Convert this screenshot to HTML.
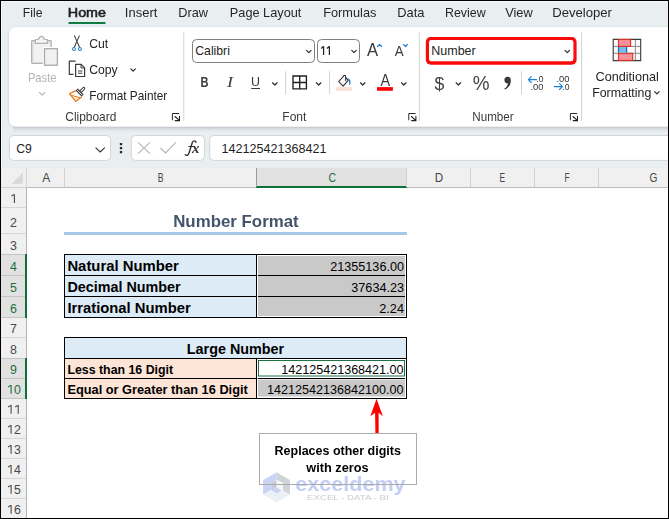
<!DOCTYPE html>
<html><head><meta charset="utf-8"><title>Excel</title>
<style>html,body{margin:0;padding:0;background:#fff;overflow:hidden}svg{display:block}text{font-family:"Liberation Sans",sans-serif;white-space:pre}</style>
</head><body>
<svg width="669" height="519" viewBox="0 0 669 519">
<defs>
<filter id="sh" x="-5%" y="-20%" width="110%" height="150%"><feGaussianBlur stdDeviation="1.6"/></filter>
<linearGradient id="rs" x1="0" y1="0" x2="0" y2="1"><stop offset="0" stop-color="#aab3bc" stop-opacity="0.75"/><stop offset="0.45" stop-color="#b8c0c8" stop-opacity="0.35"/><stop offset="1" stop-color="#c8d0d8" stop-opacity="0"/></linearGradient>
</defs>
<rect x="0" y="0" width="669" height="519" fill="#e9eef1" />
<g opacity="0.999">
<text x="22.8" y="16.8" textLength="19.6" lengthAdjust="spacingAndGlyphs" font-size="12.2" font-weight="normal" font-style="normal" fill="#262626" >File</text>
<text x="67.8" y="16.8" textLength="38.2" lengthAdjust="spacingAndGlyphs" font-size="12.2" font-weight="normal" font-style="normal" fill="#1f1f1f" stroke="#1f1f1f" stroke-width="0.55">Home</text>
<text x="124.8" y="16.8" textLength="32.6" lengthAdjust="spacingAndGlyphs" font-size="12.2" font-weight="normal" font-style="normal" fill="#262626" >Insert</text>
<text x="178.2" y="16.8" textLength="29.8" lengthAdjust="spacingAndGlyphs" font-size="12.2" font-weight="normal" font-style="normal" fill="#262626" >Draw</text>
<text x="229.8" y="16.8" textLength="71.6" lengthAdjust="spacingAndGlyphs" font-size="12.2" font-weight="normal" font-style="normal" fill="#262626" >Page Layout</text>
<text x="323.2" y="16.8" textLength="53.2" lengthAdjust="spacingAndGlyphs" font-size="12.2" font-weight="normal" font-style="normal" fill="#262626" >Formulas</text>
<text x="397.2" y="16.8" textLength="27.2" lengthAdjust="spacingAndGlyphs" font-size="12.2" font-weight="normal" font-style="normal" fill="#262626" >Data</text>
<text x="445.0" y="16.8" textLength="40.7" lengthAdjust="spacingAndGlyphs" font-size="12.2" font-weight="normal" font-style="normal" fill="#262626" >Review</text>
<text x="505.2" y="16.8" textLength="27.5" lengthAdjust="spacingAndGlyphs" font-size="12.2" font-weight="normal" font-style="normal" fill="#262626" >View</text>
<text x="552.2" y="16.8" textLength="59.8" lengthAdjust="spacingAndGlyphs" font-size="12.2" font-weight="normal" font-style="normal" fill="#262626" >Developer</text>
<rect x="68.3" y="22" width="37.4" height="2" fill="#107c41" rx="1"/>
<rect x="9" y="28" width="680" height="98.6" rx="8" fill="#8d969e" opacity="0.5" filter="url(#sh)"/>
<rect x="13" y="126" width="660" height="6" fill="url(#rs)"/>
<rect x="9" y="27" width="680" height="99.8" rx="7" fill="#ffffff"/>
<line x1="183.8" y1="32.3" x2="183.8" y2="121" stroke="#d2d2d2" stroke-width="1" />
<line x1="419.3" y1="32.3" x2="419.3" y2="121" stroke="#d2d2d2" stroke-width="1" />
<line x1="581.6" y1="32.3" x2="581.6" y2="121" stroke="#d2d2d2" stroke-width="1" />
<line x1="285.6" y1="71.2" x2="285.6" y2="94.3" stroke="#d2d2d2" stroke-width="1" />
<line x1="329.6" y1="71.2" x2="329.6" y2="94.3" stroke="#d2d2d2" stroke-width="1" />
<line x1="521.5" y1="71.2" x2="521.5" y2="94.3" stroke="#d2d2d2" stroke-width="1" />
<g>
<rect x="31.6" y="40.7" width="19.6" height="22.7" rx="0.8" fill="#e3e3e3" stroke="#b2b2b2" stroke-width="1.2"/>
<rect x="33.7" y="43.6" width="16.4" height="18.4" fill="#f2f2f2"/>
<path d="M35.4 43.4 V39.5 H38.4 C38.9 37.4 40 36.4 41.4 36.4 C42.8 36.4 43.9 37.4 44.4 39.5 H47.4 V43.4 Z" fill="#f5f5f5" stroke="#b2b2b2" stroke-width="1.2" stroke-linejoin="round"/>
<rect x="42.8" y="47" width="16" height="19.5" fill="#ffffff"/>
<rect x="44.5" y="48.7" width="12.9" height="16.5" fill="#f1f1f1" stroke="#aaaaaa" stroke-width="1.3"/>
</g>
<text x="27.9" y="81.8" textLength="28.6" lengthAdjust="spacingAndGlyphs" font-size="12.2" font-weight="normal" font-style="normal" fill="#b4b4b4" >Paste</text>
<path d="M39.4 92.39999999999999 L42.1 95.2 L44.800000000000004 92.39999999999999" fill="none" stroke="#b4b4b4" stroke-width="1.1" stroke-linecap="round" stroke-linejoin="round"/>
<g fill="none" stroke="#444" stroke-width="1.1" stroke-linecap="round">
<path d="M74.5 35.9 L79.5 47.3 M79.3 35.9 L74.3 47.3"/>
</g>
<circle cx="73.95" cy="49" r="1.45" fill="#fff" stroke="#1a7fd6" stroke-width="1.05"/>
<circle cx="79.9" cy="49" r="1.45" fill="#fff" stroke="#1a7fd6" stroke-width="1.05"/>
<text x="89.2" y="48.1" textLength="19.0" lengthAdjust="spacingAndGlyphs" font-size="12.2" font-weight="normal" font-style="normal" fill="#242424" >Cut</text>
<g fill="none" stroke="#3b3b3b" stroke-width="1.2" stroke-linejoin="round">
<path d="M75.6 61.2 H69.3 V74.4 H73.5"/>
<path d="M75.6 64.4 H81.2 L84.6 67.8 V76.5 H75.6 Z"/>
<path d="M81 64.6 V68 H84.4" stroke-width="1"/>
<path d="M78 71 H82.4 M78 73.2 H82.4" stroke-width="1"/>
</g>
<text x="89.2" y="73.7" textLength="28.5" lengthAdjust="spacingAndGlyphs" font-size="12.2" font-weight="normal" font-style="normal" fill="#242424" >Copy</text>
<path d="M130.85 68.875 L133.1 71.125 L135.35 68.875" fill="none" stroke="#2c2c2c" stroke-width="1.2" stroke-linecap="round" stroke-linejoin="round"/>
<g stroke-linejoin="round" stroke-linecap="round" fill="none">
<path d="M75.4 90.9 L69.5 93.7 L75.8 101.4 L81.5 97" fill="#fff" stroke="#e8730c" stroke-width="1.2"/>
<path d="M74.6 98 L78 98.3 L76.1 100.4 Z" fill="#ffd79a" stroke="none"/>
<path d="M70.9 95.2 L79.6 97.6" stroke="#e8730c" stroke-width="1"/>
<path d="M80.8 91.4 L83.7 88.5" stroke="#333" stroke-width="3.1"/>
<path d="M80.6 91.6 L83.7 88.5" stroke="#fff" stroke-width="1.1"/>
<path d="M76.7 89.5 L82.6 95.5" stroke="#333" stroke-width="3" stroke-linecap="butt"/>
<path d="M77.2 90 L82.1 95" stroke="#fff" stroke-width="1" stroke-linecap="butt"/>
</g>
<text x="89.2" y="99.9" textLength="78.1" lengthAdjust="spacingAndGlyphs" font-size="12.2" font-weight="normal" font-style="normal" fill="#242424" >Format Painter</text>
<text x="65.3" y="121.2" textLength="51.0" lengthAdjust="spacingAndGlyphs" font-size="12.2" font-weight="normal" font-style="normal" fill="#3a3a3a" >Clipboard</text>
<path d="M172.4 119.9 V113.5 H178.8" fill="none" stroke="#2a2a2a" stroke-width="1" stroke-linecap="round"/>
<path d="M175.0 116.5 L179.3 120.3 M179.5 116.3 V120.6 H175.20000000000002" fill="none" stroke="#1e1e1e" stroke-width="1.05" stroke-linecap="round" stroke-linejoin="miter"/>
<rect x="192.5" y="39.5" width="122" height="23" rx="4" fill="#fff" stroke="#808080" stroke-width="1"/>
<path d="M306.55 50.375 L308.8 52.625 L311.05 50.375" fill="none" stroke="#2c2c2c" stroke-width="1.2" stroke-linecap="round" stroke-linejoin="round"/>
<rect x="317.5" y="39.5" width="42" height="23" rx="4" fill="#fff" stroke="#808080" stroke-width="1"/>
<path d="M321.3 48.5 L323.3 46.5 M323.6 46.3 V55 M327.1 48.5 L329.1 46.5 M329.4 46.3 V55" fill="none" stroke="#262626" stroke-width="1.25"/>
<path d="M351.75 50.375 L354.0 52.625 L356.25 50.375" fill="none" stroke="#2c2c2c" stroke-width="1.2" stroke-linecap="round" stroke-linejoin="round"/>
<text x="367.0" y="55.9" textLength="11.1" lengthAdjust="spacingAndGlyphs" font-size="18.4" font-weight="normal" font-style="normal" fill="#3a3a3a" >A</text>
<path d="M377.6 46.5 L379.6 44.4 L381.6 46.5" fill="none" stroke="#1a7fd6" stroke-width="1.2" stroke-linecap="round" stroke-linejoin="round"/>
<text x="394.7" y="55.9" textLength="8.9" lengthAdjust="spacingAndGlyphs" font-size="14.4" font-weight="normal" font-style="normal" fill="#3a3a3a" >A</text>
<path d="M403.5 44.4 L405.5 46.5 L407.5 44.4" fill="none" stroke="#1a7fd6" stroke-width="1.2" stroke-linecap="round" stroke-linejoin="round"/>
<text x="200.4" y="86.8" textLength="8.0" lengthAdjust="spacingAndGlyphs" font-size="14.4" font-weight="bold" font-style="normal" fill="#3a3a3a" >B</text>
<text x="227" y="86.8" textLength="6" lengthAdjust="spacingAndGlyphs" font-size="15" font-style="italic" fill="#3a3a3a" style="font-family:'Liberation Serif',serif">I</text>
<text x="251.1" y="85.9" textLength="9.0" lengthAdjust="spacingAndGlyphs" font-size="13.2" font-weight="normal" font-style="normal" fill="#3a3a3a" >U</text>
<line x1="251.2" y1="88.5" x2="260" y2="88.5" stroke="#3a3a3a" stroke-width="1" />
<path d="M272.55 82.775 L274.8 85.025 L277.05 82.775" fill="none" stroke="#2c2c2c" stroke-width="1.2" stroke-linecap="round" stroke-linejoin="round"/>
<path d="M293 76 H306.4 V88.9 H293 Z M299.7 76 V88.9 M293 82.45 H306.4" fill="none" stroke="#1f1f1f" stroke-width="1.35"/>
<path d="M316.45 82.775 L318.7 85.025 L320.95 82.775" fill="none" stroke="#2c2c2c" stroke-width="1.2" stroke-linecap="round" stroke-linejoin="round"/>
<g fill="none" stroke="#333" stroke-width="1.1" stroke-linejoin="round" stroke-linecap="round">
<path d="M343.3 76.5 L338.7 81.7 L343.1 86.1 L348.3 80.3 L346.2 78.1" fill="#fbfbfb"/>
<path d="M343.3 76.5 Q343.5 75.4 344.5 75.4 Q345.7 75.4 345.7 76.7 V80.7"/>
</g>
<path d="M347.4 78.3 C349.8 78.5 351 80.8 350.5 83.2 C350.3 84.4 349.8 85.1 349.3 85.1 C349.6 82.6 349.2 80.5 347.4 78.3 Z" fill="#1a6fc9"/>
<rect x="336.1" y="87.1" width="15.8" height="3.7" fill="#fbdfd2" />
<path d="M360.45 82.775 L362.7 85.025 L364.95 82.775" fill="none" stroke="#2c2c2c" stroke-width="1.2" stroke-linecap="round" stroke-linejoin="round"/>
<text x="380.4" y="85.8" textLength="9.6" lengthAdjust="spacingAndGlyphs" font-size="15.6" font-weight="normal" font-style="normal" fill="#3a3a3a" >A</text>
<rect x="377" y="87.1" width="15.9" height="3.7" fill="#fb0606" />
<path d="M401.55 82.775 L403.8 85.025 L406.05 82.775" fill="none" stroke="#2c2c2c" stroke-width="1.2" stroke-linecap="round" stroke-linejoin="round"/>
<text x="282.3" y="121" textLength="24.1" lengthAdjust="spacingAndGlyphs" font-size="12.2" font-weight="normal" font-style="normal" fill="#3a3a3a" >Font</text>
<path d="M408.8 119.9 V113.5 H415.2" fill="none" stroke="#2a2a2a" stroke-width="1" stroke-linecap="round"/>
<path d="M411.40000000000003 116.5 L415.7 120.3 M415.90000000000003 116.3 V120.6 H411.6" fill="none" stroke="#1e1e1e" stroke-width="1.05" stroke-linecap="round" stroke-linejoin="miter"/>
<rect x="425.8" y="37.1" width="150.8" height="27.7" rx="5" fill="#fb0a0a"/>
<rect x="429" y="40.1" width="144.4" height="21.1" rx="2.2" fill="#fff"/>
<path d="M565.0500000000001 50.375 L567.3000000000001 52.625 L569.5500000000001 50.375" fill="none" stroke="#2c2c2c" stroke-width="1.2" stroke-linecap="round" stroke-linejoin="round"/>
<text x="434.5" y="89.6" textLength="9.8" lengthAdjust="spacingAndGlyphs" font-size="19.2" font-weight="normal" font-style="normal" fill="#444" >$</text>
<path d="M456.15 82.775 L458.4 85.025 L460.65 82.775" fill="none" stroke="#2c2c2c" stroke-width="1.2" stroke-linecap="round" stroke-linejoin="round"/>
<text x="472.8" y="89.8" textLength="16.8" lengthAdjust="spacingAndGlyphs" font-size="19.7" font-weight="normal" font-style="normal" fill="#444" >%</text>
<path d="M507.5 76.7 A3.3 3.3 0 1 0 507.9 83.3 C507.6 85.6 506.4 87.5 504.2 88.8 L504.8 89.5 C508.7 88 511.1 84.6 510.8 80 A3.3 3.3 0 0 0 507.5 76.7 Z" fill="#3a3a3a"/>
<g font-size="9.2" fill="#333">
<text x="536.3" y="81.7" textLength="7.1" lengthAdjust="spacingAndGlyphs">.0</text>
<text x="530.4" y="90.1" textLength="13" lengthAdjust="spacingAndGlyphs">.00</text>
<text x="556.5" y="81.7" textLength="13" lengthAdjust="spacingAndGlyphs">.00</text>
<text x="562.4" y="90.1" textLength="7.1" lengthAdjust="spacingAndGlyphs">.0</text>
</g>
<path d="M536.6 79.6 H528.4 M531.3 76.7 L528.3 79.6 L531.3 82.5" fill="none" stroke="#1a7fd6" stroke-width="1.1" stroke-linecap="round" stroke-linejoin="round"/>
<path d="M554.2 86.6 H562.4 M559.5 83.7 L562.5 86.6 L559.5 89.5" fill="none" stroke="#1a7fd6" stroke-width="1.1" stroke-linecap="round" stroke-linejoin="round"/>
<text x="472.3" y="121" textLength="41.4" lengthAdjust="spacingAndGlyphs" font-size="12.2" font-weight="normal" font-style="normal" fill="#3a3a3a" >Number</text>
<path d="M570.4 119.9 V113.5 H576.8" fill="none" stroke="#2a2a2a" stroke-width="1" stroke-linecap="round"/>
<path d="M573.0 116.5 L577.3 120.3 M577.5 116.3 V120.6 H573.1999999999999" fill="none" stroke="#1e1e1e" stroke-width="1.05" stroke-linecap="round" stroke-linejoin="miter"/>
<g>
<rect x="613.2" y="39.4" width="27.5" height="21.2" fill="#fcfcfc" />
<path d="M613.2 46.4 H640.7 M613.2 53.3 H640.7 M635.4 39.4 V60.6" fill="none" stroke="#8a8a8a" stroke-width="1"/>
<path d="M613.2 39.4 H640.7 V60.6 H613.2 Z" fill="none" stroke="#3a3a3a" stroke-width="1.1"/>
<rect x="618.5" y="39.5" width="12.1" height="6.9" fill="#fd919b" stroke="#e0301e" stroke-width="1.1"/>
<rect x="618.5" y="53.3" width="14.2" height="7.2" fill="#fd919b" stroke="#e0301e" stroke-width="1.1"/>
<rect x="618.6" y="47" width="8" height="5.7" fill="#7ab8ea" />
<path d="M618.5 46.9 V52.8 M626.6 46.9 V52.8" stroke="#0f6cbd" stroke-width="1.2" fill="none"/>
</g>
<text x="595.5" y="81.1" textLength="63.4" lengthAdjust="spacingAndGlyphs" font-size="12.2" font-weight="normal" font-style="normal" fill="#242424" >Conditional</text>
<text x="592.2" y="96.5" textLength="59.1" lengthAdjust="spacingAndGlyphs" font-size="12.2" font-weight="normal" font-style="normal" fill="#242424" >Formatting</text>
<path d="M654.6500000000001 91.575 L656.9000000000001 93.825 L659.1500000000001 91.575" fill="none" stroke="#2c2c2c" stroke-width="1.2" stroke-linecap="round" stroke-linejoin="round"/>
<rect x="9.5" y="135.5" width="101" height="24.9" rx="4" fill="#fff" stroke="#d0d4d7" stroke-width="1"/>
<path d="M95.9 147.8 L100.2 152.0 L104.5 147.8" fill="none" stroke="#3a3a3a" stroke-width="1.15" stroke-linecap="round" stroke-linejoin="round"/>
<rect x="119.85" y="143.0" width="2.3" height="2.2" rx="0.4" fill="#262626"/>
<rect x="119.85" y="147.1" width="2.3" height="2.2" rx="0.4" fill="#262626"/>
<rect x="119.85" y="151.1" width="2.3" height="2.2" rx="0.4" fill="#262626"/>
<rect x="131.3" y="135.5" width="73.1" height="24.9" rx="4" fill="#fff" stroke="#d0d4d7" stroke-width="1"/>
<path d="M138 142.3 L150 153.7 M150 142.3 L138 153.7" stroke="#b4b4b4" stroke-width="1.1" fill="none"/>
<path d="M160.4 148 L165.6 153 L175.8 142.3" stroke="#b4b4b4" stroke-width="1.1" fill="none"/>
<path d="M196 142.3 C195.7 140.5 193.3 140.1 192.3 142.6 L189 153 C188.2 155.5 186.3 156.1 185.3 154.6" fill="none" stroke="#2e2e2e" stroke-width="1.35" stroke-linecap="round"/>
<path d="M188.4 146.5 H194.4" stroke="#2e2e2e" stroke-width="1.1" fill="none"/>
<text x="192" y="152.9" font-size="14.8" font-style="italic" font-weight="bold" fill="#333" style="font-family:'Liberation Serif',serif" textLength="7.4" lengthAdjust="spacingAndGlyphs">x</text>
<rect x="209.7" y="135.5" width="480" height="24.9" rx="4" fill="#fff" stroke="#d0d4d7" stroke-width="1"/>
<rect x="0" y="168" width="669" height="351" fill="#ffffff" />
<rect x="0" y="168" width="669" height="19" fill="#f0f0f0" />
<rect x="0" y="187" width="26" height="332" fill="#f0f0f0" />
<path d="M22.9 172.6 V183.8 H11.7 Z" fill="#d9d9d9"/>
<rect x="257" y="168" width="150" height="18" fill="#e1e1e1" />
<rect x="1" y="187" width="668" height="1" fill="#bcbcbc" />
<rect x="1" y="187" width="26" height="1" fill="#d0d0d0" />
<rect x="256" y="186" width="151" height="2" fill="#0f703b" />
<rect x="26" y="168" width="1" height="19" fill="#d2d2d2" />
<rect x="64" y="168" width="1" height="19" fill="#d2d2d2" />
<rect x="256" y="168" width="1" height="19" fill="#9a9a9a" />
<rect x="406" y="168" width="1" height="19" fill="#d2d2d2" />
<rect x="470" y="168" width="1" height="19" fill="#d2d2d2" />
<rect x="534" y="168" width="1" height="19" fill="#d2d2d2" />
<rect x="598" y="168" width="1" height="19" fill="#d2d2d2" />
<rect x="1" y="254" width="24" height="63" fill="#e1e1e1" />
<rect x="1" y="358" width="24" height="40" fill="#e1e1e1" />
<rect x="1" y="207.0" width="25" height="1" fill="#d6d6d6" />
<rect x="1" y="233.0" width="25" height="1" fill="#d6d6d6" />
<rect x="1" y="254.0" width="25" height="1" fill="#c4c4c4" />
<rect x="1" y="275.0" width="25" height="1" fill="#c4c4c4" />
<rect x="1" y="296.0" width="25" height="1" fill="#c4c4c4" />
<rect x="1" y="317.0" width="25" height="1" fill="#c4c4c4" />
<rect x="1" y="337.0" width="25" height="1" fill="#d6d6d6" />
<rect x="1" y="358.0" width="25" height="1" fill="#c4c4c4" />
<rect x="1" y="378.0" width="25" height="1" fill="#c4c4c4" />
<rect x="1" y="398.0" width="25" height="1" fill="#c4c4c4" />
<rect x="1" y="418.0" width="25" height="1" fill="#d6d6d6" />
<rect x="1" y="438.0" width="25" height="1" fill="#d6d6d6" />
<rect x="1" y="458.0" width="25" height="1" fill="#d6d6d6" />
<rect x="1" y="478.0" width="25" height="1" fill="#d6d6d6" />
<rect x="1" y="498.0" width="25" height="1" fill="#d6d6d6" />
<rect x="26" y="188" width="1" height="331" fill="#b4b4b4" />
<rect x="25" y="254" width="2" height="64" fill="#0f703b" />
<rect x="25" y="358" width="2" height="41" fill="#0f703b" />
</g>
<text x="42.2" y="181.8" textLength="8.0" lengthAdjust="spacingAndGlyphs" font-size="12.3" font-weight="normal" font-style="normal" fill="#444" >A</text>
<text x="157.8" y="181.8" textLength="5.8" lengthAdjust="spacingAndGlyphs" font-size="12.3" font-weight="normal" font-style="normal" fill="#444" >B</text>
<text x="328.6" y="181.8" textLength="7.5" lengthAdjust="spacingAndGlyphs" font-size="12.3" font-weight="normal" font-style="normal" fill="#1e6e42" >C</text>
<text x="434.8" y="181.8" textLength="8.4" lengthAdjust="spacingAndGlyphs" font-size="12.3" font-weight="normal" font-style="normal" fill="#444" >D</text>
<text x="499.5" y="181.8" textLength="5.6" lengthAdjust="spacingAndGlyphs" font-size="12.3" font-weight="normal" font-style="normal" fill="#444" >E</text>
<text x="564.5" y="181.8" textLength="5.2" lengthAdjust="spacingAndGlyphs" font-size="12.3" font-weight="normal" font-style="normal" fill="#444" >F</text>
<text x="649.4" y="181.8" textLength="7.9" lengthAdjust="spacingAndGlyphs" font-size="12.3" font-weight="normal" font-style="normal" fill="#444" >G</text>
<path d="M11.35 196.15 L14.10 194.45 M14.40 194.15 V202.90" fill="none" stroke="#4a4a4a" stroke-width="1.1"/>
<text x="10" y="226.8" textLength="6.9" lengthAdjust="spacingAndGlyphs" font-size="12.3" font-weight="normal" font-style="normal" fill="#4a4a4a" >2</text>
<text x="10" y="249.8" textLength="6.9" lengthAdjust="spacingAndGlyphs" font-size="12.3" font-weight="normal" font-style="normal" fill="#4a4a4a" >3</text>
<text x="10" y="270.8" textLength="6.9" lengthAdjust="spacingAndGlyphs" font-size="12.3" font-weight="normal" font-style="normal" fill="#1e6e42" >4</text>
<text x="10" y="291.8" textLength="6.9" lengthAdjust="spacingAndGlyphs" font-size="12.3" font-weight="normal" font-style="normal" fill="#1e6e42" >5</text>
<text x="10" y="312.8" textLength="6.9" lengthAdjust="spacingAndGlyphs" font-size="12.3" font-weight="normal" font-style="normal" fill="#1e6e42" >6</text>
<text x="10" y="332.8" textLength="6.9" lengthAdjust="spacingAndGlyphs" font-size="12.3" font-weight="normal" font-style="normal" fill="#4a4a4a" >7</text>
<text x="10" y="353.8" textLength="6.9" lengthAdjust="spacingAndGlyphs" font-size="12.3" font-weight="normal" font-style="normal" fill="#4a4a4a" >8</text>
<text x="10" y="373.8" textLength="6.9" lengthAdjust="spacingAndGlyphs" font-size="12.3" font-weight="normal" font-style="normal" fill="#1e6e42" >9</text>
<path d="M8.05 387.05 L10.80 385.35 M11.10 385.05 V393.80" fill="none" stroke="#1e6e42" stroke-width="1.1"/>
<text x="14.0" y="393.8" textLength="6.85" lengthAdjust="spacingAndGlyphs" font-size="12.3" font-weight="normal" font-style="normal" fill="#1e6e42" >0</text>
<path d="M8.05 407.05 L10.80 405.35 M11.10 405.05 V413.80" fill="none" stroke="#4a4a4a" stroke-width="1.1"/>
<path d="M15.15 407.05 L17.90 405.35 M18.20 405.05 V413.80" fill="none" stroke="#4a4a4a" stroke-width="1.1"/>
<path d="M8.05 427.05 L10.80 425.35 M11.10 425.05 V433.80" fill="none" stroke="#4a4a4a" stroke-width="1.1"/>
<text x="14.0" y="433.8" textLength="6.85" lengthAdjust="spacingAndGlyphs" font-size="12.3" font-weight="normal" font-style="normal" fill="#4a4a4a" >2</text>
<path d="M8.05 447.05 L10.80 445.35 M11.10 445.05 V453.80" fill="none" stroke="#4a4a4a" stroke-width="1.1"/>
<text x="14.0" y="453.8" textLength="6.85" lengthAdjust="spacingAndGlyphs" font-size="12.3" font-weight="normal" font-style="normal" fill="#4a4a4a" >3</text>
<path d="M8.05 467.05 L10.80 465.35 M11.10 465.05 V473.80" fill="none" stroke="#4a4a4a" stroke-width="1.1"/>
<text x="14.0" y="473.8" textLength="6.85" lengthAdjust="spacingAndGlyphs" font-size="12.3" font-weight="normal" font-style="normal" fill="#4a4a4a" >4</text>
<path d="M8.05 487.05 L10.80 485.35 M11.10 485.05 V493.80" fill="none" stroke="#4a4a4a" stroke-width="1.1"/>
<text x="14.0" y="493.8" textLength="6.85" lengthAdjust="spacingAndGlyphs" font-size="12.3" font-weight="normal" font-style="normal" fill="#4a4a4a" >5</text>
<path d="M8.05 507.05 L10.80 505.35 M11.10 505.05 V513.80" fill="none" stroke="#4a4a4a" stroke-width="1.1"/>
<text x="14.0" y="513.8" textLength="6.85" lengthAdjust="spacingAndGlyphs" font-size="12.3" font-weight="normal" font-style="normal" fill="#4a4a4a" >6</text>
<g opacity="0.999">
<text x="173.2" y="226.5" textLength="125.5" lengthAdjust="spacingAndGlyphs" font-size="16.4" font-weight="bold" font-style="normal" fill="#44546a" >Number Format</text>
<rect x="64" y="232" width="343" height="3" fill="#a8c8e8" />
<rect x="64.5" y="254.5" width="192.0" height="63.0" fill="#ddebf7" />
<rect x="256.5" y="254.5" width="150.0" height="63.0" fill="#ffffff" />
<rect x="258" y="256" width="147" height="60" fill="#c9c9c9" />
<rect x="64.5" y="337.5" width="342.0" height="21.0" fill="#ddebf7" />
<rect x="64.5" y="358.5" width="192.0" height="40.0" fill="#fce4d6" />
<rect x="256.5" y="358.5" width="150.0" height="40.0" fill="#ffffff" />
<rect x="257.8" y="379.5" width="147.2" height="17.1" fill="#c9c9c9" />
<rect x="258.5" y="360.5" width="146" height="15.5" fill="#fff" stroke="#1e7145" stroke-width="1"/>
<line x1="64.0" y1="254.5" x2="407.0" y2="254.5" stroke="#000" stroke-width="1" />
<line x1="64.0" y1="275.5" x2="407.0" y2="275.5" stroke="#000" stroke-width="1" />
<line x1="64.0" y1="296.5" x2="407.0" y2="296.5" stroke="#000" stroke-width="1" />
<line x1="64.0" y1="317.5" x2="407.0" y2="317.5" stroke="#000" stroke-width="1" />
<rect x="405" y="255" width="1" height="62" fill="#fff" />
<rect x="257" y="255" width="1" height="62" fill="#fff" />
<line x1="64.5" y1="254.5" x2="64.5" y2="317.5" stroke="#000" stroke-width="1" />
<line x1="256.5" y1="254.5" x2="256.5" y2="317.5" stroke="#000" stroke-width="1" />
<line x1="406.5" y1="254.5" x2="406.5" y2="317.5" stroke="#000" stroke-width="1" />
<line x1="64.0" y1="337.5" x2="407.0" y2="337.5" stroke="#000" stroke-width="1" />
<line x1="64.0" y1="358.5" x2="407.0" y2="358.5" stroke="#000" stroke-width="1" />
<line x1="64.0" y1="378.5" x2="407.0" y2="378.5" stroke="#000" stroke-width="1" />
<line x1="64.0" y1="398.5" x2="407.0" y2="398.5" stroke="#000" stroke-width="1" />
<line x1="64.5" y1="337.5" x2="64.5" y2="398.5" stroke="#000" stroke-width="1" />
<line x1="406.5" y1="337.5" x2="406.5" y2="398.5" stroke="#000" stroke-width="1" />
<rect x="405" y="359" width="1" height="39" fill="#fff" />
<rect x="257" y="359" width="0.8" height="39" fill="#fff" />
<line x1="256.5" y1="358.5" x2="256.5" y2="398.5" stroke="#000" stroke-width="1" />
</g>
<text x="67.4" y="270.9" textLength="111.5" lengthAdjust="spacingAndGlyphs" font-size="14.2" font-weight="bold" font-style="normal" fill="#000" >Natural Number</text>
<text x="67.4" y="291.9" textLength="113.2" lengthAdjust="spacingAndGlyphs" font-size="14.2" font-weight="bold" font-style="normal" fill="#000" >Decimal Number</text>
<text x="67.4" y="312.8" textLength="123.3" lengthAdjust="spacingAndGlyphs" font-size="14.2" font-weight="bold" font-style="normal" fill="#000" >Irrational Number</text>
<text x="330.2" y="271.4" textLength="73.8" lengthAdjust="spacingAndGlyphs" font-size="13.4" font-weight="normal" font-style="normal" fill="#000" >21355136.00</text>
<text x="351.3" y="292.2" textLength="52.7" lengthAdjust="spacingAndGlyphs" font-size="13.4" font-weight="normal" font-style="normal" fill="#000" >37634.23</text>
<text x="379.2" y="312.9" textLength="24.8" lengthAdjust="spacingAndGlyphs" font-size="13.4" font-weight="normal" font-style="normal" fill="#000" >2.24</text>
<text x="186.8" y="354.4" textLength="97.4" lengthAdjust="spacingAndGlyphs" font-size="14.2" font-weight="bold" font-style="normal" fill="#000" >Large Number</text>
<text x="67.4" y="373.9" textLength="105.7" lengthAdjust="spacingAndGlyphs" font-size="13.2" font-weight="bold" font-style="normal" fill="#000" >Less than 16 Digit</text>
<text x="67.4" y="393.9" textLength="180.4" lengthAdjust="spacingAndGlyphs" font-size="13.2" font-weight="bold" font-style="normal" fill="#000" >Equal or Greater than 16 Digit</text>
<text x="281.2" y="373.9" textLength="122.4" lengthAdjust="spacingAndGlyphs" font-size="13.1" font-weight="normal" font-style="normal" fill="#000" >142125421368421.00</text>
<text x="267" y="394" textLength="136.6" lengthAdjust="spacingAndGlyphs" font-size="13.1" font-weight="normal" font-style="normal" fill="#000" >14212542136842100.00</text>
<g opacity="0.999">
<path d="M376.5 398.7 L382.9 416.3 L378.6 412.8 L378.7 433.5 H375.4 L375.1 412.8 L370.4 416.3 Z" fill="#ff0000"/>
<rect x="259.5" y="433.5" width="157" height="51" fill="#fff"/>
</g><g opacity="0.999">
<text x="274.6" y="454.7" textLength="126.3" lengthAdjust="spacingAndGlyphs" font-size="12.8" font-weight="bold" font-style="normal" fill="#000" >Replaces other digits</text>
<text x="306.3" y="472.2" textLength="62.3" lengthAdjust="spacingAndGlyphs" font-size="12.8" font-weight="bold" font-style="normal" fill="#000" >with zeros</text>
<g>
<path d="M276.6 472.2 L263.1 480 V494.6 L271.3 489.9 V483.1 L276.6 480.2 Z" fill="#c9d4f5"/>
<path d="M271.3 483.1 L276.6 480.2 V487.5 L271.3 490.6 Z" fill="#c6cad4"/>
<path d="M276.6 472.2 L289.9 480 V494.6 L282.8 490.6 V483.1 L276.6 479.8 Z" fill="#d0d3d8"/>
<path d="M276.6 480.6 L281.9 483.4 V489.6 L276.6 487.5 Z" fill="#f4f6fa"/>
<path d="M271.3 490.6 L276.6 487.5 L282 490.6 L276.6 493.8 Z" fill="#c9d4f5"/>
<path d="M263.1 494.6 L271.3 490.2 L276.6 493.8 L282.8 490.4 L289.9 494.6 L276.6 502.6 Z" fill="#ebeff6"/>
<text x="295.2" y="491.2" textLength="110.4" lengthAdjust="spacingAndGlyphs" font-size="19.6" font-weight="bold" font-style="normal" fill="#c3cef4" >exceldemy</text>
<text x="307" y="500.2" textLength="81.6" lengthAdjust="spacingAndGlyphs" font-size="6.9" font-weight="normal" font-style="normal" fill="#c8ccd2" >EXCEL - DATA - BI</text>
</g>
<rect x="259.5" y="433.5" width="157" height="51" fill="none" stroke="#ababab" stroke-width="1"/>
</g>
<text x="195.3" y="55.3" textLength="34.6" lengthAdjust="spacingAndGlyphs" font-size="12.2" font-weight="normal" font-style="normal" fill="#242424" >Calibri</text>
<text x="431.3" y="55.3" textLength="44.4" lengthAdjust="spacingAndGlyphs" font-size="12.2" font-weight="normal" font-style="normal" fill="#242424" >Number</text>
<text x="16.3" y="152.9" textLength="15.6" lengthAdjust="spacingAndGlyphs" font-size="12.2" font-weight="normal" font-style="normal" fill="#242424" >C9</text>
<text x="221.5" y="152.8" textLength="105.0" lengthAdjust="spacingAndGlyphs" font-size="12.4" font-weight="normal" font-style="normal" fill="#1f1f1f" >142125421368421</text>
<rect x="1" y="1" width="667" height="1" fill="#f4f7f9" opacity="0.8"/>
<rect x="1" y="1" width="1" height="166" fill="#f4f7f9" opacity="0.8"/>
<rect x="0" y="0" width="669" height="1" fill="#000" />
<rect x="0" y="0" width="1" height="519" fill="#000" />
<rect x="668" y="0" width="1" height="519" fill="#000" />
<rect x="0" y="518" width="669" height="1" fill="#000" />
</svg></body></html>
